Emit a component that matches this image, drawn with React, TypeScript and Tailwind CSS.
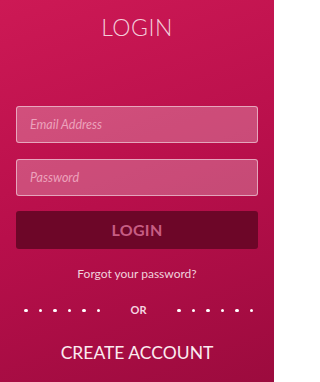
const Dots = () => (
  <div className="flex items-center gap-[11px]">
    {Array.from({ length: 6 }).map((_, i) => (
      <span key={i} className="h-[3.5px] w-[3.5px] rounded-full bg-white" />
    ))}
  </div>
);

export default function App() {
  return (
    <div
      className="flex h-[382px] w-[274px] flex-col items-center overflow-hidden bg-[linear-gradient(160deg,#cd1955_0%,#b80f4b_50%,#9c0b3e_100%)] px-4 text-white"
      style={{ fontFamily: "Lato, 'Open Sans', sans-serif" }}
    >
      <h1 className="mt-[13px] text-[23px] leading-[28px] font-light tracking-[0.5px] text-[#f3cdda]">LOGIN</h1>

      <input
        type="text"
        placeholder="Email Address"
        className="mt-[65px] h-[37px] w-full rounded-[3px] border-[1.5px] border-white/50 bg-white/25 px-[13px] text-[12.5px] italic text-white outline-none placeholder:text-[#eca2bc]"
      />
      <input
        type="password"
        placeholder="Password"
        className="mt-[16px] h-[37px] w-full rounded-[3px] border-[1.5px] border-white/50 bg-white/25 px-[13px] text-[12.5px] italic text-white outline-none placeholder:text-[#eca2bc]"
      />
      <button className="mt-[15px] h-[38px] w-full rounded-[3px] bg-[#6d0628] text-[16px] font-bold tracking-[0.3px] text-[#c75d83]">
        LOGIN
      </button>

      <a className="mt-[17px] text-[12px] leading-[16px] text-[#f1d2dd]">Forgot your password?</a>

      <div className="mt-[20px] flex w-full items-center justify-between pl-[8px] pr-[5px]">
        <Dots />
        <span className="text-[11px] font-bold text-[#f4d6e0]">OR</span>
        <Dots />
      </div>

      <button className="mt-[23px] text-[17.5px] leading-[22px] text-[#fbeaf0]">CREATE ACCOUNT</button>
    </div>
  );
}
